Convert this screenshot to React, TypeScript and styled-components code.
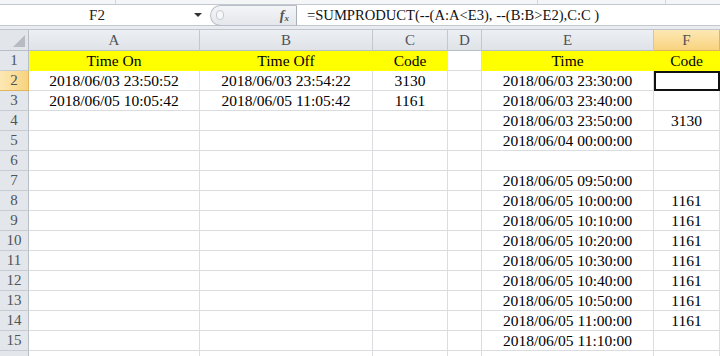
import React from 'react';
import styled, { createGlobalStyle } from 'styled-components';

const GlobalStyle = createGlobalStyle`
	html, body {
		margin: 0;
		padding: 0;
		overflow: hidden;
		background: #ffffff;
	}
	* {
		box-sizing: border-box;
	}
`;

const colunas = [
	{ nome: 'A', largura: 171 },
	{ nome: 'B', largura: 173 },
	{ nome: 'C', largura: 75 },
	{ nome: 'D', largura: 34 },
	{ nome: 'E', largura: 172 },
	{ nome: 'F', largura: 66 },
];

const amarelas = ['A', 'B', 'C', 'E', 'F'];

type Linha = { [col: string]: string };

const dados: Linha[] = [
	{ A: 'Time On', B: 'Time Off', C: 'Code', E: 'Time', F: 'Code' },
	{ A: '2018/06/03 23:50:52', B: '2018/06/03 23:54:22', C: '3130', E: '2018/06/03 23:30:00' },
	{ A: '2018/06/05 10:05:42', B: '2018/06/05 11:05:42', C: '1161', E: '2018/06/03 23:40:00' },
	{ E: '2018/06/03 23:50:00', F: '3130' },
	{ E: '2018/06/04 00:00:00' },
	{},
	{ E: '2018/06/05 09:50:00' },
	{ E: '2018/06/05 10:00:00', F: '1161' },
	{ E: '2018/06/05 10:10:00', F: '1161' },
	{ E: '2018/06/05 10:20:00', F: '1161' },
	{ E: '2018/06/05 10:30:00', F: '1161' },
	{ E: '2018/06/05 10:40:00', F: '1161' },
	{ E: '2018/06/05 10:50:00', F: '1161' },
	{ E: '2018/06/05 11:00:00', F: '1161' },
	{ E: '2018/06/05 11:10:00' },
];

const colunaAtiva = 'F';
const linhaAtiva = 2;

function App() {
	const gradeColunas = `29px ${colunas.map(c => `${c.largura}px`).join(' ')}`;

	return (
		<>
			<GlobalStyle />
			<Janela>
				<FaixaTopo>
					<Divisoria style={{ width: 116 }} />
					<Divisoria style={{ width: 422 }} />
					<Divisoria style={{ width: 128 }} />
				</FaixaTopo>
				<BarraFormula>
					<CaixaNome>
						<NomeTexto>F2</NomeTexto>
						<Seta />
					</CaixaNome>
					<Capsula>
						<Bolinha />
						<Fx>
							f<sub>x</sub>
						</Fx>
					</Capsula>
					<CampoFormula>=SUMPRODUCT(--(A:A&lt;E3), --(B:B&gt;E2),C:C )</CampoFormula>
				</BarraFormula>
				<Planilha $colunas={gradeColunas}>
					<Canto>
						<svg width="14" height="14" viewBox="0 0 14 14">
							<polygon points="13,1 13,13 1,13" fill="#b7bcc3" />
						</svg>
					</Canto>
					{colunas.map(c => (
						<CabecalhoColuna key={c.nome} $ativo={c.nome === colunaAtiva}>
							{c.nome}
						</CabecalhoColuna>
					))}
					{dados.map((linha, i) => {
						const numero = i + 1;
						return (
							<React.Fragment key={numero}>
								<CabecalhoLinha $ativo={numero === linhaAtiva}>{numero}</CabecalhoLinha>
								{colunas.map(c => (
									<Celula
										key={c.nome}
										$amarela={numero === 1 && amarelas.includes(c.nome)}
										$selecionada={numero === linhaAtiva && c.nome === colunaAtiva}
									>
										{linha[c.nome] || ''}
									</Celula>
								))}
							</React.Fragment>
						);
					})}
					{/* linha 16, cortada pela borda da janela */}
					<CabecalhoLinha $ativo={false} />
					{colunas.map(c => (
						<Celula key={c.nome} $amarela={false} $selecionada={false} />
					))}
				</Planilha>
			</Janela>
		</>
	);
}

export default App;

const Janela = styled.div`
	width: 720px;
	height: 356px;
	overflow: hidden;
	background: #e9ecf0;
	display: flex;
	flex-direction: column;
	font-family: "Liberation Serif", "Times New Roman", serif;
`;

const FaixaTopo = styled.div`
	display: flex;
	height: 5px;
	background: #f3f5f7;
	border-bottom: 1px solid #c3c8cf;
	flex-shrink: 0;
`;

const Divisoria = styled.div`
	border-right: 1px solid #d3d7dc;
	height: 100%;
`;

const BarraFormula = styled.div`
	display: flex;
	flex-direction: row;
	height: 21px;
	flex-shrink: 0;
	background: #ffffff;
	border-bottom: 1px solid #c3c8cf;
	margin-bottom: 3px;
`;

const CaixaNome = styled.div`
	display: flex;
	align-items: center;
	width: 210px;
	background: #ffffff;
`;

const NomeTexto = styled.div`
	width: 194px;
	text-align: center;
	font-size: 15px;
	color: #222;
`;

const Seta = styled.div`
	width: 0;
	height: 0;
	border-left: 4px solid transparent;
	border-right: 4px solid transparent;
	border-top: 4px solid #333;
`;

const Capsula = styled.div`
	display: flex;
	align-items: center;
	justify-content: space-between;
	width: 87px;
	height: 21px;
	padding: 0 7px 0 5px;
	background: linear-gradient(#f4f5f7, #e4e7eb);
	border: 1px solid #b9bfc8;
	border-right: 1px solid #a9b0ba;
	border-radius: 11px 0 0 11px;
`;

const Bolinha = styled.div`
	width: 8px;
	height: 10px;
	border: 1px solid #c5cad1;
	border-radius: 4px;
	background: #f7f8fa;
	margin-top: -2px;
`;

const Fx = styled.div`
	font-family: "Liberation Serif", serif;
	font-style: italic;
	font-weight: bold;
	font-size: 14px;
	color: #555;
	sub {
		font-size: 9px;
		vertical-align: -1px;
	}
`;

const CampoFormula = styled.div`
	flex: 1;
	display: flex;
	align-items: center;
	padding-left: 10px;
	font-size: 14.6px;
	color: #111;
	white-space: nowrap;
`;

const Planilha = styled.div<{ $colunas: string }>`
	display: grid;
	grid-template-columns: ${p => p.$colunas};
	grid-auto-rows: 20px;
	grid-template-rows: 21px;
	background: #ffffff;
	border-top: 1px solid #c0c5cc;
`;

const Canto = styled.div`
	background: #e2e6eb;
	border-right: 1px solid #b8bec6;
	border-bottom: 1px solid #b8bec6;
	display: flex;
	align-items: flex-end;
	justify-content: flex-end;
	padding: 0 2px 2px 0;
`;

const CabecalhoColuna = styled.div<{ $ativo: boolean }>`
	display: flex;
	align-items: center;
	justify-content: center;
	font-size: 15px;
	color: #505358;
	background: ${p => (p.$ativo ? 'linear-gradient(#fde8b4, #f8d37f)' : 'linear-gradient(#eceff3, #dfe3e8)')};
	border-right: 1px solid ${p => (p.$ativo ? '#e2b55d' : '#c3c8cf')};
	border-bottom: 1px solid ${p => (p.$ativo ? '#e2b55d' : '#b8bec6')};
	white-space: nowrap;
`;

const CabecalhoLinha = styled.div<{ $ativo: boolean }>`
	display: flex;
	align-items: center;
	justify-content: center;
	font-size: 15px;
	color: #505358;
	background: ${p => (p.$ativo ? 'linear-gradient(90deg, #fde8b4, #f8d37f)' : '#e3e7ec')};
	border-right: 1px solid ${p => (p.$ativo ? '#e2b55d' : '#b8bec6')};
	border-bottom: 1px solid ${p => (p.$ativo ? '#e2b55d' : '#c8ccd2')};
`;

const Celula = styled.div<{ $amarela: boolean; $selecionada: boolean }>`
	display: flex;
	align-items: center;
	justify-content: center;
	font-size: 15.5px;
	color: #000;
	white-space: nowrap;
	overflow: hidden;
	background: ${p => (p.$amarela ? '#ffff00' : '#ffffff')};
	border-right: 1px solid ${p => (p.$amarela ? '#ffff00' : '#dadcdf')};
	border-bottom: 1px solid ${p => (p.$amarela ? '#ffff00' : '#dadcdf')};
	outline: ${p => (p.$selecionada ? '2px solid #111' : 'none')};
	outline-offset: -2px;
`;
